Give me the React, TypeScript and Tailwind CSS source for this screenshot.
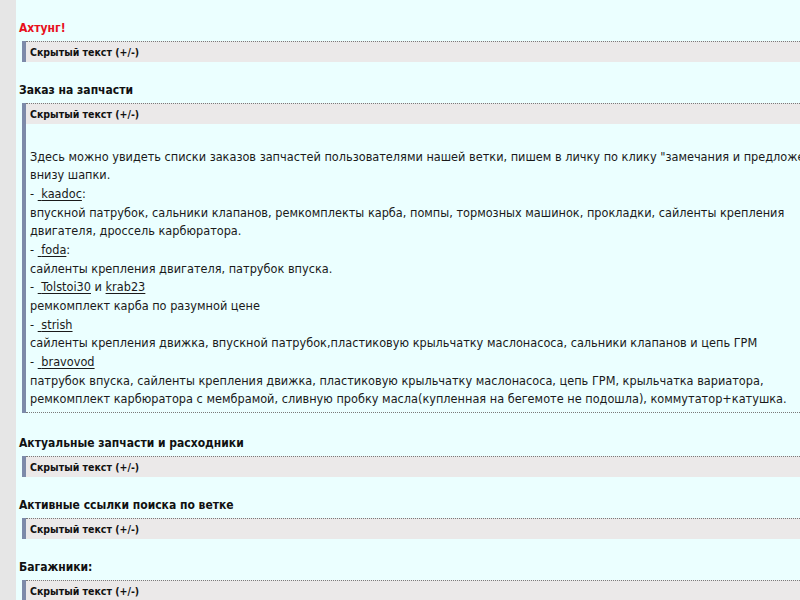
const FONT = "font-['DejaVu_Sans_Condensed','DejaVu_Sans',sans-serif] font-stretch-condensed"

function Nick({ name }: { name: string }) {
  return <span className="underline decoration-1 underline-offset-2">&nbsp;{name}</span>
}

function Spoiler({ children }: { children?: React.ReactNode }) {
  return (
    <div className="border-l-4 border-[#7d8aa9]">
      <div className="border-t border-dotted border-[#7a7a7a] bg-[#ebe9e9] py-[3px] pl-[4px] text-[10.5px] font-bold leading-[14px] text-[#111]">
        Скрытый текст (+/-)
      </div>
      {children ? (
        <div className="whitespace-nowrap border-b border-dotted border-[#7a7a7a] pb-[3px] pl-[4px] pt-[5px] text-[12.6px] leading-[18.65px] text-[#1a1a1a]">
          {children}
        </div>
      ) : null}
    </div>
  )
}

function Section({ title, red, open }: { title: string; red?: boolean; open?: React.ReactNode }) {
  return (
    <div className={open ? 'mb-[21px]' : 'mb-[19px]'}>
      <div className={`text-[12px] font-bold leading-[18px] ${red ? 'text-[#e8101c]' : 'text-[#111]'}`}>{title}</div>
      <div className="ml-[3px] mt-[4px]">
        <Spoiler>{open}</Spoiler>
      </div>
    </div>
  )
}

export default function App() {
  return (
    <div className={`flex h-[600px] w-[800px] overflow-hidden ${FONT}`}>
      <div className="w-4 shrink-0 bg-[#e6e6e6]" />
      <div className="w-[840px] shrink-0 bg-[#ebffff] pl-[3px] pt-[19px]">
        <Section title="Ахтунг!" red />
        <Section
          title="Заказ на запчасти"
          open={
            <>
              <br />
              Здесь можно увидеть списки заказов запчастей пользователями нашей ветки, пишем в личку по клику "замечания и предложения"
              <br />
              внизу шапки.
              <br />
              - <Nick name="kaadoc" />:
              <br />
              впускной патрубок, сальники клапанов, ремкомплекты карба, помпы, тормозных машинок, прокладки, сайленты крепления
              <br />
              двигателя, дроссель карбюратора.
              <br />
              - <Nick name="foda" />:
              <br />
              сайленты крепления двигателя, патрубок впуска.
              <br />
              - <Nick name="Tolstoi30" /> и <span className="underline decoration-1 underline-offset-2">krab23</span>
              <br />
              ремкомплект карба по разумной цене
              <br />
              - <Nick name="strish" />
              <br />
              сайленты крепления движка, впускной патрубок,пластиковую крыльчатку маслонасоса, сальники клапанов и цепь ГРМ
              <br />
              - <Nick name="bravovod" />
              <br />
              патрубок впуска, сайленты крепления движка, пластиковую крыльчатку маслонасоса, цепь ГРМ, крыльчатка вариатора,
              <br />
              ремкомплект карбюратора с мембрамой, сливную пробку масла(купленная на бегемоте не подошла), коммутатор+катушка.
            </>
          }
        />
        <Section title="Актуальные запчасти и расходники" />
        <Section title="Активные ссылки поиска по ветке" />
        <Section title="Багажники:" />
      </div>
    </div>
  )
}
